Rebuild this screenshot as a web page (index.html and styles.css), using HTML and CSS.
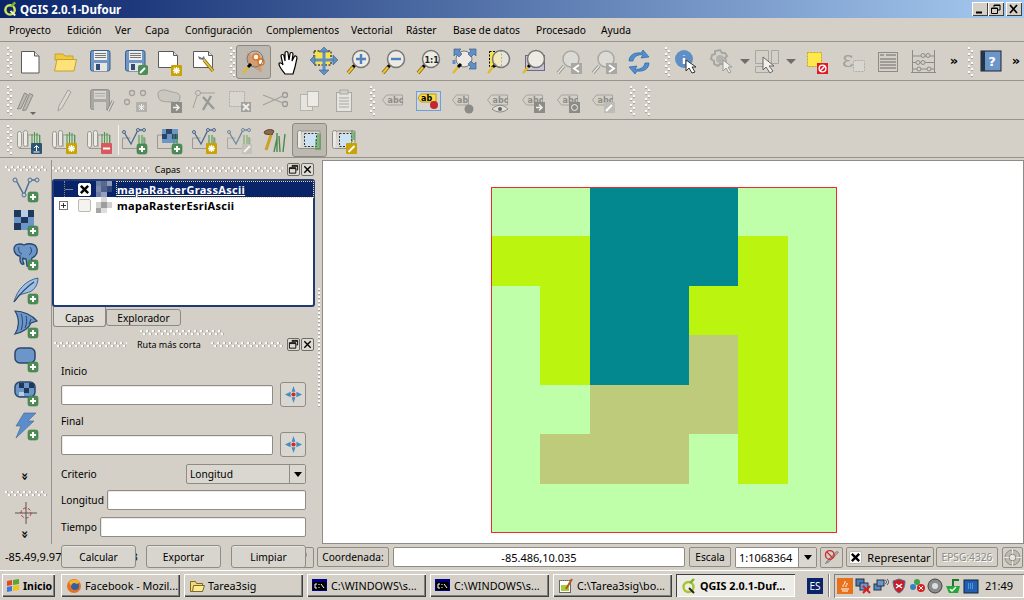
FILE: index.html
```html
<!DOCTYPE html>
<html lang="es">
<head>
<meta charset="utf-8">
<title>QGIS 2.0.1-Dufour</title>
<link rel="stylesheet" href="styles.css">
</head>
<body>
<svg class="defs" aria-hidden="true">
  <defs>
    <symbol id="plus" viewBox="0 0 32 32"><rect x="18" y="20" width="10" height="10" rx="2" fill="#4c8c55" stroke="#3c7a46" stroke-width=".6"/><path d="M23 22v6M20 25h6" stroke="#fff" stroke-width="2"/></symbol>
    <symbol id="star" viewBox="0 0 32 32"><rect x="17" y="19" width="11" height="11" rx="1" fill="#c9a203"/><path d="M22.500 21v7M19 24.500h7M20 22l5 5M25 22l-5 5" stroke="#fff" stroke-width="1.300"/></symbol>
    <symbol id="mag" viewBox="0 0 32 32"><path d="M5 27l6-7" stroke="#7d6a1e" stroke-width="3.600"/><path d="M5 27l6-7" stroke="#eec531" stroke-width="2"/><path d="M10 21l3-3" stroke="#000" stroke-width="3"/><circle cx="18" cy="13" r="8.500" fill="#eceae3" stroke="#777" stroke-width="1.500"/></symbol>
    <symbol id="gmag" viewBox="0 0 32 32"><path d="M5 27l6-7" stroke="#8f8d88" stroke-width="3.400"/><path d="M5 27l6-7" stroke="#e6e4de" stroke-width="1.600"/><circle cx="18" cy="13" r="8" fill="#dcdad4" stroke="#a9a7a1" stroke-width="1.500"/></symbol>
    <symbol id="floppy" viewBox="0 0 32 32"><rect x="6.500" y="4.500" width="19.500" height="20.500" rx="2" fill="#6f96c6" stroke="#3b5f8e"/><rect x="10" y="5" width="13" height="9" fill="#f0efea"/><path d="M11 7.500h11M11 9.500h11M11 11.500h11" stroke="#777"/><rect x="10" y="17" width="13" height="8" fill="#e6e5e0"/><rect x="12" y="18" width="4" height="6" fill="#2f4d75"/></symbol>
    <symbol id="gfloppy" viewBox="0 0 32 32"><rect x="6.500" y="4.500" width="19" height="20" rx="2" fill="#aaa8a2" stroke="#94928c"/><rect x="10" y="6" width="12" height="8" fill="#d6d4ce"/><path d="M11 8.500h10M11 11h10" stroke="#aaa"/><rect x="10" y="17" width="12" height="8" fill="#cfcdc7"/><path d="M24 26l5-10" stroke="#888" stroke-width="3"/><path d="M24 26l5-10" stroke="#ddd" stroke-width="1.200"/></symbol>
    <symbol id="scroll" viewBox="0 0 32 32"><rect x="3.500" y="7.500" width="4" height="16" rx="2" fill="#eceae4" stroke="#9a9892"/><rect x="9.500" y="6.500" width="4" height="16" rx="2" fill="#eceae4" stroke="#9a9892"/><path d="M5 24.500h21V11H14v12" fill="#dad8d1" stroke="#9a9892"/><path d="M18 20V10M20.500 20V8M23 20V9M25.500 20V11" stroke="#4c9a4c" stroke-width="1.100"/></symbol>
    <symbol id="vec" viewBox="0 0 32 32"><path d="M3.500 24.500V14h8M26 14v10.500H3.500" fill="none" stroke="#9a9892"/><path d="M5 8l7 12 7-14 6 0" fill="none" stroke="#46688f" stroke-width="1.300"/><circle cx="5" cy="8" r="1.500" fill="#d4d0c8" stroke="#46688f"/><circle cx="19" cy="6" r="1.500" fill="#d4d0c8" stroke="#46688f"/><circle cx="25" cy="6" r="1.500" fill="#d4d0c8" stroke="#46688f"/><path d="M20 21V11M23 21V11M25 21V13" stroke="#4c9a4c" stroke-width="1.100"/></symbol>
    <symbol id="abc" viewBox="0 0 32 32"><path d="M5.500 15l4-5h16v10h-16z" fill="#d4d0c8" stroke="#a6a49e"/><text x="10.500" y="18" class="svgt" fill="#8e8c87">abc</text></symbol>
    <symbol id="cmd" viewBox="0 0 16 16"><rect x="0" y="1" width="15" height="12" fill="#000080"/><rect x="1" y="4" width="13" height="8" fill="#000"/><path d="M3 6h2M3 10h2M3 6v4M7 6v1M7 9v1M9 6l3 4" stroke="#fff"/></symbol>
    <symbol id="dest" viewBox="0 0 20 20"><path d="M10 1l2 6h-4zM10 19l-2-6h4zM1 10l6-3v6zM19 10l-6 3V7z" fill="#3f8ec4"/><circle cx="10" cy="10" r="2.200" fill="#e02222"/></symbol>
    <symbol id="undock" viewBox="0 0 12 12"><path d="M4.500 3V1.500h6v5H9M1.500 4h7v6h-7zM1.500 5h7M4.500 2.500h6" fill="none" stroke="#000"/></symbol>
    <symbol id="shut" viewBox="0 0 12 12"><path d="M2.500 2.500l7 7M9.500 2.500l-7 7" stroke="#000" stroke-width="1.500"/></symbol>
    <symbol id="cross" viewBox="0 0 12 12"><path d="M2 2l8 8M10 2l-8 8" stroke="#000" stroke-width="2.600"/></symbol>
  </defs>
</svg>

<div class="win">
  <header class="title">
    <svg class="logo" viewBox="0 0 16 16"><circle cx="7.500" cy="9" r="5" fill="none" stroke="#d4e35a" stroke-width="2.600"/><path d="M8 10l5 5" stroke="#f4f6c0" stroke-width="2.200"/><path d="M9 5l4-4" stroke="#7fb02c" stroke-width="2.600"/></svg>
    <span class="title-text">QGIS 2.0.1-Dufour</span>
    <span class="winbtns">
      <span class="wb"><svg viewBox="0 0 16 14"><path d="M4 10.500h6" stroke="#000" stroke-width="2"/></svg></span>
      <span class="wb"><svg viewBox="0 0 16 14"><path d="M6 5V3h6v5h-2M6 3.500h6M3.500 6h6v5.500h-6zM3.500 6.500h6" fill="none" stroke="#000"/></svg></span>
      <span class="wb wb-close"><svg viewBox="0 0 16 14"><path d="M4 3l7 8M11 3l-7 8" stroke="#000" stroke-width="1.700"/></svg></span>
    </span>
  </header>

  <nav class="menu">
    <span>Proyecto</span><span>Edición</span><span>Ver</span><span>Capa</span><span>Configuración</span><span>Complementos</span><span>Vectorial</span><span>Ráster</span><span>Base de datos</span><span>Procesado</span><span>Ayuda</span>
  </nav>

  <div class="tb">
    <span class="hgrip"></span>
    <span class="ic"><svg viewBox="0 0 32 32"><path d="M7.500 5.500h13l4.500 4.500v17H7.500z" fill="#fff" stroke="#5a5a5a"/><path d="M20.500 5.500V10H25" fill="#ddd" stroke="#5a5a5a"/></svg></span>
    <span class="ic"><svg viewBox="0 0 32 32"><path d="M6 12V8h8l2 2h8v4H6z" fill="#f0ca3e" stroke="#c4a22b"/><path d="M5.500 25 8 13.500h19.500L25 25z" fill="#fde27a" stroke="#c4a22b"/></svg></span>
    <span class="ic"><svg viewBox="0 0 32 32"><use href="#floppy"/></svg></span>
    <span class="ic"><svg viewBox="0 0 32 32"><use href="#floppy"/><rect x="19" y="19" width="10" height="10" rx="2" fill="#4c8c55"/><path d="M21 27l5-5" stroke="#fff" stroke-width="2"/></svg></span>
    <span class="ic"><svg viewBox="0 0 32 32"><path d="M4.500 5.500h15l4 4v12h-19z" fill="#fff" stroke="#5a5a5a"/><path d="M19.500 5.500v4h4" fill="#ddd" stroke="#5a5a5a"/><use href="#star"/></svg></span>
    <span class="ic"><svg viewBox="0 0 32 32"><path d="M4.500 5.500h15l4 4v12h-19z" fill="#fff" stroke="#5a5a5a"/><path d="M19.500 5.500v4h4" fill="#ddd" stroke="#5a5a5a"/><path d="M9 10l1 3 4 1 2-1-1-3-2 2-2-1z" fill="#777"/><path d="M15 14l9 11" stroke="#7d6a1e" stroke-width="3.400"/><path d="M15 14l9 11" stroke="#eec531" stroke-width="1.800"/></svg></span>
    <span class="hgrip hgrip-m"></span>
    <span class="ic ic-on"><svg viewBox="0 0 32 32"><path d="M9 6l8 6 8-1-2 8 1 8-9-6-6-4z" fill="#d9925e" opacity=".7"/><circle cx="18" cy="11" r="3" fill="#fff" stroke="#e2731c" stroke-width="1.500"/><circle cx="23" cy="16" r="3" fill="#fff" stroke="#e2731c" stroke-width="1.500"/><circle cx="17" cy="13" r="8" fill="none" stroke="#777"/><path d="M5 27l6-7" stroke="#e0b92c" stroke-width="2.400"/><path d="M10 21l3-3" stroke="#000" stroke-width="3"/></svg></span>
    <span class="ic"><svg viewBox="0 0 32 32"><path d="M12 28c-2-3-6-7-6-10 0-2 3-1 4 1l-2-9c0-2 3-2 3 0l1 5V7c0-2 3-2 3 0l1 7 1-6c0-2 3-2 3 0l-1 7 2-4c1-2 3-1 3 1l-2 9-2 7z" fill="#fff" stroke="#000" stroke-width="1.200"/></svg></span>
    <span class="ic"><svg viewBox="0 0 32 32"><rect x="6" y="5" width="17" height="14" fill="#f7e24b" stroke="#000" stroke-dasharray="2 1.500"/><path d="M16 14V4M16 14v11M16 14H4M16 14h12" stroke="#5f8fc4" stroke-width="3"/><path d="M16 1l5 5H11zM16 29l-5-5h10zM2 14l5-5v10zM30 14l-5 5V9z" fill="#5f8fc4" stroke="#3d6189" stroke-width=".6"/></svg></span>
    <span class="ic"><svg viewBox="0 0 32 32"><use href="#mag"/><path d="M18 8v10M13 13h10" stroke="#4f81bd" stroke-width="2.400"/></svg></span>
    <span class="ic"><svg viewBox="0 0 32 32"><use href="#mag"/><path d="M13 13h10" stroke="#4f81bd" stroke-width="2.400"/></svg></span>
    <span class="ic"><svg viewBox="0 0 32 32"><use href="#mag"/><text x="11.500" y="16.500" class="svgt svgt-d">1:1</text></svg></span>
    <span class="ic"><svg viewBox="0 0 32 32"><circle cx="16" cy="13" r="8" fill="#eceae3" stroke="#777"/><path d="M6 3h7l-2 2 3 3-3 3-3-3-2 2zM28 3h-7l2 2-3 3 3 3 3-3 2 2zM28 23h-7l2-2-3-3 3-3 3 3 2-2z" fill="#5f8fc4" stroke="#3d6189" stroke-width=".7"/><path d="M6 14v4" stroke="#5f8fc4" stroke-width="3"/><path d="M5 27l6-7" stroke="#e0b92c" stroke-width="2.400"/><path d="M10 21l3-3" stroke="#000" stroke-width="3"/></svg></span>
    <span class="ic"><svg viewBox="0 0 32 32"><rect x="6.500" y="5.500" width="12" height="15" fill="#f7e24b" stroke="#000" stroke-dasharray="2 1.500"/><path d="M5 27l6-7" stroke="#e0b92c" stroke-width="2.400"/><path d="M10 21l3-3" stroke="#000" stroke-width="3"/><circle cx="18" cy="13" r="8.500" fill="#eceae3" fill-opacity=".75" stroke="#777" stroke-width="1.500"/></svg></span>
    <span class="ic"><svg viewBox="0 0 32 32"><rect x="7.500" y="9.500" width="19" height="15" fill="#c7c3d2" stroke="#6d6780"/><path d="M5 27l6-7" stroke="#e0b92c" stroke-width="2.400"/><path d="M10 21l3-3" stroke="#000" stroke-width="3"/><circle cx="18" cy="13" r="8.500" fill="#eceae3" stroke="#777" stroke-width="1.500"/></svg></span>
    <span class="ic"><svg viewBox="0 0 32 32"><use href="#gmag"/><rect x="18" y="17" width="11" height="11" fill="#a9a7a1"/><path d="M26 19l-5 3.500 5 3.500" fill="none" stroke="#fff" stroke-width="1.800"/></svg></span>
    <span class="ic"><svg viewBox="0 0 32 32"><use href="#gmag"/><rect x="18" y="17" width="11" height="11" fill="#a9a7a1"/><path d="M21 19l5 3.500-5 3.500" fill="none" stroke="#fff" stroke-width="1.800"/></svg></span>
    <span class="ic"><svg viewBox="0 0 32 32"><path d="M6 15c0-6 6-9 12-8l2-3 6 7-8 1 2-3c-4-1-9 1-10 6z" fill="#4f8fd0" stroke="#2c64a0" stroke-width=".7"/><path d="M26 17c0 6-6 9-12 8l-2 3-6-7 8-1-2 3c4 1 9-1 10-6z" fill="#4f8fd0" stroke="#2c64a0" stroke-width=".7"/></svg></span>
    <span class="hgrip hgrip-e"></span>
    <span class="ic"><svg viewBox="0 0 32 32"><circle cx="12" cy="13" r="9" fill="#5f8fc4"/><path d="M12 9v.5M12 12v6" stroke="#fff" stroke-width="2.400"/><path d="M14 14v11l3-3 3 5 3-1-3-5h4z" fill="#fff" stroke="#333"/></svg></span>
    <span class="ic ic-33"><svg viewBox="0 0 32 32"><path d="M14 4l2 3h3l2 3-2 2 1 3-3 3h-3l-2 2-4-2v-3l-3-2 1-4 3-1V5z" fill="#d4d0c8" stroke="#a8a6a0" stroke-width="2"/><circle cx="14" cy="13" r="4" fill="#b4b2ac"/><path d="M17 14v11l3-3 3 5 2-1-3-5h4z" fill="#f0efea" stroke="#999"/></svg></span>
    <span class="drop"></span>
    <span class="ic ic-32"><svg viewBox="0 0 32 32"><path d="M3.500 4.500h13v13h-13zM19.500 4.500h7v13h-7zM3.500 20.500h13v6h-13z" fill="#d4d0c8" stroke="#a8a6a0"/><path d="M11 11v13l3-3 4 6 3-2-4-5h5z" fill="#f0efea" stroke="#666"/></svg></span>
    <span class="drop"></span>
    <span class="ic ic-37"><svg viewBox="0 0 32 32"><rect x="6.500" y="6.500" width="14" height="14" fill="#fde84d" stroke="#c7a51f" stroke-dasharray="2 1"/><rect x="16" y="17" width="11" height="11" fill="#dd1a25"/><circle cx="21.500" cy="22.500" r="3.400" fill="none" stroke="#fff" stroke-width="1.400"/><path d="M19 25l5-5" stroke="#fff" stroke-width="1.400"/></svg></span>
    <span class="ic"><svg viewBox="0 0 32 32"><text x="5" y="21" class="svgt-e">ε</text><rect x="16.500" y="14.500" width="11" height="11" rx="1" fill="#d8d6cf" stroke="#aeaca6" stroke-dasharray="2 1"/></svg></span>
    <span class="ic"><svg viewBox="0 0 32 32"><rect x="6.500" y="6.500" width="19" height="19" fill="#d4d0c8" stroke="#8d8b86"/><path d="M8 9h4M14 9h10M8 13h16M8 16h16M8 19h16M8 22h16" stroke="#8d8b86" stroke-width="1.300"/></svg></span>
    <span class="ic"><svg viewBox="0 0 32 32"><path d="M5.500 4v22M27.500 4v22M4 26.500h25M6 10h21M6 16.500h21M6 23h21" stroke="#8d8b86" fill="none"/><circle cx="16" cy="9.500" r="2" fill="#d4d0c8" stroke="#8d8b86"/><circle cx="21" cy="9.500" r="2" fill="#d4d0c8" stroke="#8d8b86"/><circle cx="11" cy="16.500" r="2" fill="#d4d0c8" stroke="#8d8b86"/><circle cx="16" cy="16.500" r="2" fill="#d4d0c8" stroke="#8d8b86"/><circle cx="12" cy="23" r="2" fill="#d4d0c8" stroke="#8d8b86"/><circle cx="22" cy="23" r="2" fill="#d4d0c8" stroke="#8d8b86"/></svg></span>
    <span class="more">»</span>
    <span class="hgrip"></span>
    <span class="ic ic-36"><svg viewBox="0 0 32 32"><rect x="6" y="5" width="20" height="20" fill="#6c96c8" stroke="#223"/><rect x="6" y="5" width="4" height="20" fill="#23354a"/><text x="17" y="20" class="svgt-q">?</text></svg></span>
    <span class="more more-e">»</span>
  </div>

  <div class="tb tb-2">
    <span class="hgrip"></span>
    <span class="ic"><svg viewBox="0 0 32 32"><g fill="#bab8b2" stroke="#8d8b86"><path d="M3.500 24l7-16 3 1.500-6.500 14z"/><path d="M8.500 25.500l7-17 3.500 1.500-7 15z"/></g><path d="M16 27h6l-3 3z" fill="#666"/></svg></span>
    <span class="ic"><svg viewBox="0 0 32 32"><path d="M9 26l1-5L19 5l3 2-9 16z" fill="#dad8d1" stroke="#a3a19b"/></svg></span>
    <span class="ic"><svg viewBox="0 0 32 32"><use href="#gfloppy"/></svg></span>
    <span class="ic"><svg viewBox="0 0 32 32"><circle cx="13" cy="8" r="2.500" fill="none" stroke="#a3a19b" stroke-width="1.300"/><circle cx="24" cy="8" r="2.500" fill="none" stroke="#a3a19b" stroke-width="1.300"/><circle cx="8" cy="17" r="2.500" fill="none" stroke="#a3a19b" stroke-width="1.300"/><rect x="17" y="17" width="11" height="10" fill="#b3b1ab"/><path d="M22.500 19v6M19.500 22h6M20 20l5 5M25 20l-5 5" stroke="#eee"/></svg></span>
    <span class="ic"><svg viewBox="0 0 32 32"><path d="M4 9c0-4 6-5 11-3s11 1 11 6-3 6-8 5-14 2-14-8z" fill="#c9c7c0" stroke="#a3a19b"/><rect x="17" y="17" width="11" height="11" fill="#8d8b86"/><path d="M19 22.500h5M22 19.500l3 3-3 3" fill="none" stroke="#eee" stroke-width="1.500"/></svg></span>
    <span class="ic"><svg viewBox="0 0 32 32"><circle cx="9" cy="8" r="2.500" fill="none" stroke="#a3a19b"/><path d="M8 11L4 23M11 8h15" stroke="#a3a19b"/><path d="M14 12l11 12M22 11l-8 14" stroke="#999" stroke-width="2.400"/></svg></span>
    <span class="ic"><svg viewBox="0 0 32 32"><rect x="5.500" y="6.500" width="15" height="15" fill="#d8d6cf" stroke="#aeaca6" stroke-dasharray="2 1"/><rect x="17" y="17" width="10" height="10" fill="#a3a19b"/><path d="M19 19l6 6M25 19l-6 6" stroke="#eee" stroke-width="2"/></svg></span>
    <span class="ic"><svg viewBox="0 0 32 32"><circle cx="26" cy="10" r="2.500" fill="none" stroke="#999" stroke-width="1.300"/><circle cx="26" cy="19" r="2.500" fill="none" stroke="#999" stroke-width="1.300"/><path d="M4 10l20 8M4 20l20-9" stroke="#a3a19b" stroke-width="1.300"/></svg></span>
    <span class="ic"><svg viewBox="0 0 32 32"><rect x="6.500" y="9.500" width="12" height="16" fill="#e6e4de" stroke="#b5b3ad"/><rect x="13.500" y="6.500" width="11" height="15" fill="#eceae4" stroke="#b5b3ad"/></svg></span>
    <span class="ic"><svg viewBox="0 0 32 32"><rect x="7.500" y="7.500" width="15" height="19" fill="#e6e4de" stroke="#a9a7a1"/><path d="M10 13h10M10 16h10M10 19h10M10 22h10" stroke="#a9a7a1"/><rect x="11" y="5" width="8" height="4" fill="#d4d0c8" stroke="#a9a7a1"/></svg></span>
    <span class="hgrip hgrip-l"></span>
    <span class="ic"><svg viewBox="0 0 32 32"><use href="#abc"/></svg></span>
    <span class="ic"><svg viewBox="0 0 32 32"><rect x="4.500" y="6.500" width="24" height="19" fill="#d8d5ce" stroke="#6aa0e0"/><path d="M6 13l3-4h15v8H9z" fill="#f8dd4b" stroke="#b8991a"/><text x="9" y="16" class="svgt">ab</text><circle cx="22" cy="20" r="4" fill="#c1272d"/></svg></span>
    <span class="ic"><svg viewBox="0 0 32 32"><path d="M5.500 15l4-5h12v10h-12z" fill="#d4d0c8" stroke="#a6a49e"/><text x="10" y="18" class="svgt" fill="#8e8c87">ab</text><circle cx="22" cy="24" r="4.500" fill="#8d8b86"/></svg></span>
    <span class="ic"><svg viewBox="0 0 32 32"><use href="#abc"/><path d="M10 24c5-5 11-5 16 0-5 4-11 4-16 0z" fill="#e0ded8" stroke="#8d8b86"/><circle cx="18" cy="24" r="2" fill="#666"/></svg></span>
    <span class="ic"><svg viewBox="0 0 32 32"><use href="#abc"/><rect x="17" y="17" width="11" height="11" fill="#8d8b86"/><path d="M19 22.500h5M22 19.500l3 3-3 3" fill="none" stroke="#eee" stroke-width="1.500"/></svg></span>
    <span class="ic"><svg viewBox="0 0 32 32"><use href="#abc"/><rect x="17" y="17" width="11" height="11" fill="#8d8b86"/><circle cx="22.500" cy="22.500" r="3" fill="none" stroke="#eee"/></svg></span>
    <span class="ic"><svg viewBox="0 0 32 32"><use href="#abc"/><rect x="17" y="17" width="11" height="11" fill="#bebcb6"/><path d="M19 26l6-6" stroke="#fff" stroke-width="2"/></svg></span>
    <span class="hgrip hgrip-a"></span>
    <span class="hgrip hgrip-a"></span>
  </div>

  <div class="tb tb-3">
    <span class="hgrip"></span>
    <span class="ic"><svg viewBox="0 0 32 32"><use href="#scroll"/><rect x="17" y="19" width="11" height="11" rx="1" fill="#2f5574"/><path d="M22.500 27v-5M20 24l2.500-2.500L25 24M19.500 28h6" fill="none" stroke="#fff"/></svg></span>
    <span class="ic"><svg viewBox="0 0 32 32"><use href="#scroll"/><use href="#star"/></svg></span>
    <span class="ic"><svg viewBox="0 0 32 32"><use href="#scroll"/><rect x="17" y="19" width="11" height="11" rx="1" fill="#d8595f"/><path d="M19 24.500h7" stroke="#fff" stroke-width="2"/></svg></span>
    <span class="vsep"></span>
    <span class="ic"><svg viewBox="0 0 32 32"><use href="#vec"/><use href="#plus"/></svg></span>
    <span class="ic"><svg viewBox="0 0 32 32"><path d="M3.500 24.500V11h12M26 24.500H3.500" fill="none" stroke="#9a9892"/><rect x="8" y="5" width="16" height="14" fill="#6c96c8"/><rect x="12" y="5" width="6" height="5" fill="#2b4566"/><rect x="8" y="10" width="5" height="5" fill="#2b4566"/><rect x="18" y="10" width="6" height="5" fill="#2b4566"/><path d="M20 22V10M23 22V10" stroke="#4c9a4c"/><use href="#plus"/></svg></span>
    <span class="ic"><svg viewBox="0 0 32 32"><use href="#vec"/><use href="#star"/></svg></span>
    <span class="ic ic-off"><svg viewBox="0 0 32 32"><use href="#vec"/><rect x="18" y="20" width="10" height="10" fill="#bebcb6"/><path d="M20 28l6-6" stroke="#fff" stroke-width="2"/></svg></span>
    <span class="ic"><svg viewBox="0 0 32 32"><path d="M5 8c3-3 8-3 10-1l-2 4-7-1z" fill="#8a6a4e" stroke="#5c4430"/><path d="M12 11L7 26" stroke="#c9a227" stroke-width="3"/><path d="M18 28V9M21 28l-1-16M24 28l2-18M15 28l3-14" stroke="#4c8a4c" stroke-width="1.400"/></svg></span>
    <span class="ic ic-on"><svg viewBox="0 0 32 32"><rect x="3.500" y="6.500" width="4.500" height="18" rx="2" fill="#eceae4" stroke="#8d8b86"/><path d="M6 24.500h20V7H8" fill="#dad8d1" stroke="#918f89"/><rect x="10.500" y="9.500" width="12" height="13" fill="#cde3f5" stroke="#333" stroke-dasharray="2 1.500"/><path d="M24 26V9M26 26V10M22 26V15" stroke="#4c9a4c" stroke-width="1.200"/></svg></span>
    <span class="ic"><svg viewBox="0 0 32 32"><rect x="3.500" y="6.500" width="4.500" height="18" rx="2" fill="#eceae4" stroke="#8d8b86"/><path d="M6 24.500h20V7H8" fill="#dad8d1" stroke="#918f89"/><rect x="10.500" y="9.500" width="12" height="13" fill="#cde3f5" stroke="#333" stroke-dasharray="2 1.500"/><path d="M23 18V6M25 16V8" stroke="#4c9a4c" stroke-width="1.200"/><rect x="17" y="19" width="11" height="11" rx="1" fill="#c9a203"/><path d="M19.500 28l6-6" stroke="#fff" stroke-width="2"/></svg></span>
  </div>

  <main class="main">
    <aside class="rail">
      <span class="vgrip"></span>
      <span class="rl"><svg viewBox="0 0 32 32"><path d="M6 8l8 15 6-15 7 0" fill="none" stroke="#4c6f99" stroke-width="1.500"/><circle cx="5" cy="8" r="2" fill="#d4d0c8" stroke="#4c6f99"/><circle cx="14" cy="23" r="2" fill="#d4d0c8" stroke="#4c6f99"/><circle cx="20" cy="8" r="2" fill="#d4d0c8" stroke="#4c6f99"/><circle cx="27" cy="8" r="2" fill="#d4d0c8" stroke="#4c6f99"/><use href="#plus"/></svg></span>
      <span class="rl"><svg viewBox="0 0 32 32"><rect x="4" y="4" width="20" height="20" fill="#6c96c8"/><rect x="4" y="4" width="7" height="7" fill="#20395a"/><rect x="18" y="4" width="6" height="7" fill="#20395a"/><rect x="11" y="11" width="7" height="6" fill="#20395a"/><rect x="4" y="17" width="7" height="7" fill="#20395a"/><rect x="11" y="4" width="7" height="7" fill="#b7cde6"/><use href="#plus"/></svg></span>
      <span class="rl"><svg viewBox="0 0 32 32"><path d="M4 9c0-5 6-6 10-4 4-2 12-2 13 4 1 5-3 8-5 9-1 3-1 6-2 8h-3l-1-7c-1 0-2 0-3-1-1 2 0 4 1 6-2 1-4-1-4-4v-4c-3 0-6-3-6-7z" fill="#6c96c8" stroke="#27466d" stroke-width="1.300"/><path d="M9 7c-1 3 0 6 3 7M20 7c2 2 2 6-1 8" fill="none" stroke="#27466d"/><use href="#plus"/></svg></span>
      <span class="rl"><svg viewBox="0 0 32 32"><path d="M4 28C7 16 16 6 28 4c0 8-5 14-12 15l-7 2z" fill="#9dbfe3" stroke="#3f6590"/><path d="M4 28C10 20 15 14 24 8" fill="none" stroke="#27466d" stroke-width="1.200"/><use href="#plus"/></svg></span>
      <span class="rl"><svg viewBox="0 0 32 32"><path d="M5 3c8 0 17 4 22 10l-6 2c-2 5-8 9-16 11 4-6 5-15 0-23z" fill="#6c96c8" stroke="#27466d" stroke-width="1.200"/><path d="M11 6c2 4 2 11 0 16M16 8c1 3 1 8-1 12M21 11l-2 5" fill="none" stroke="#27466d"/><use href="#plus"/></svg></span>
      <span class="rl"><svg viewBox="0 0 32 32"><rect x="5" y="6" width="20" height="15" rx="5" fill="#6c96c8" stroke="#27466d" stroke-width="1.500"/><use href="#plus"/></svg></span>
      <span class="rl"><svg viewBox="0 0 32 32"><rect x="5" y="6" width="20" height="15" rx="5" fill="#6c96c8" stroke="#27466d" stroke-width="1.500"/><rect x="9" y="7" width="5" height="5" fill="#20395a"/><rect x="19" y="7" width="5" height="5" fill="#20395a"/><rect x="14" y="12" width="5" height="5" fill="#20395a"/><rect x="9" y="16" width="5" height="4" fill="#b7cde6"/><use href="#plus"/></svg></span>
      <span class="rl"><svg viewBox="0 0 32 32"><path d="M14 3h12L18 11h6L6 28l5-12H6z" fill="#5b8ccb" stroke="#3f6590" stroke-width=".6"/><use href="#plus"/></svg></span>
      <span class="chev chev-1">»</span>
      <span class="vgrip vgrip-2"></span>
      <span class="rl"><svg viewBox="0 0 32 32"><path d="M16 5v22M5 16h22" stroke="#555"/><circle cx="16" cy="16" r="5" fill="none" stroke="#b43131" stroke-dasharray="3 2"/></svg></span>
      <span class="chev chev-2">»</span>
    </aside>

    <section class="dock">
      <div class="dtitle">
        <span class="dots"></span><span class="dname">Capas</span><span class="dots"></span>
        <span class="dbtn"><svg viewBox="0 0 12 12"><use href="#undock"/></svg></span>
        <span class="dbtn"><svg viewBox="0 0 12 12"><use href="#shut"/></svg></span>
      </div>
      <div class="tree">
        <div class="node node-sel">
          <span class="twig"></span>
          <span class="chk chk-on"><svg viewBox="0 0 12 12"><use href="#cross"/></svg></span>
          <span class="thumb"><i class="t1"></i><i class="t2"></i><i class="t3"></i><i class="t4"></i><i class="t5"></i><i class="t6"></i><i class="t7"></i><i class="t8"></i><i class="t9"></i></span>
          <span class="nname nname-sel">mapaRasterGrassAscii</span>
        </div>
        <div class="node">
          <span class="expand"></span>
          <span class="chk"></span>
          <span class="thumb thumb-g"><i class="t1"></i><i class="t2"></i><i class="t3"></i><i class="t4"></i><i class="t5"></i><i class="t6"></i><i class="t7"></i><i class="t8"></i><i class="t9"></i></span>
          <span class="nname">mapaRasterEsriAscii</span>
        </div>
      </div>
      <div class="tabs"><span class="tab tab-on">Capas</span><span class="tab">Explorador</span></div>
      <div class="hdots"></div>
      <div class="dtitle dtitle-2">
        <span class="dots dots-s"></span><span class="dname">Ruta más corta</span><span class="dots"></span>
        <span class="dbtn"><svg viewBox="0 0 12 12"><use href="#undock"/></svg></span>
        <span class="dbtn"><svg viewBox="0 0 12 12"><use href="#shut"/></svg></span>
      </div>
      <form class="form">
        <label class="lab">Inicio</label>
        <div class="row"><input class="fld" type="text"><span class="pick"><svg viewBox="0 0 20 20"><use href="#dest"/></svg></span></div>
        <label class="lab lab-2">Final</label>
        <div class="row"><input class="fld" type="text"><span class="pick"><svg viewBox="0 0 20 20"><use href="#dest"/></svg></span></div>
        <div class="line line-c"><span>Criterio</span><span class="combo"><span class="combo-v">Longitud</span><span class="combo-a"></span></span></div>
        <div class="line line-l"><span class="ll">Longitud</span><input class="fld" type="text"></div>
        <div class="line"><span class="ll ll-t">Tiempo</span><input class="fld" type="text"></div>
        <div class="acts"><span class="btn">Calcular</span><span class="btn">Exportar</span><span class="btn">Limpiar</span></div>
      </form>
    </section>

    <div class="split"><span class="split-dots"></span></div>

    <section class="canvas">
      <div class="map">
        <i class="l"></i><i class="l"></i><i class="t"></i><i class="t"></i><i class="t"></i><i class="l"></i><i class="l"></i>
        <i class="y"></i><i class="y"></i><i class="t"></i><i class="t"></i><i class="t"></i><i class="y"></i><i class="l"></i>
        <i class="l"></i><i class="y"></i><i class="t"></i><i class="t"></i><i class="y"></i><i class="y"></i><i class="l"></i>
        <i class="l"></i><i class="y"></i><i class="t"></i><i class="t"></i><i class="k"></i><i class="y"></i><i class="l"></i>
        <i class="l"></i><i class="l"></i><i class="k"></i><i class="k"></i><i class="k"></i><i class="y"></i><i class="l"></i>
        <i class="l"></i><i class="k"></i><i class="k"></i><i class="k"></i><i class="l"></i><i class="y"></i><i class="l"></i>
        <i class="l"></i><i class="l"></i><i class="l"></i><i class="l"></i><i class="l"></i><i class="l"></i><i class="l"></i>
      </div>
    </section>
  </main>

  <footer class="status">
    <span class="extent">-85.49,9.97 : -85.08,10.23</span>
    <span class="sbtn sbtn-r"><svg viewBox="0 0 22 22"><circle cx="11" cy="8" r="4" fill="none" stroke="#666" stroke-width="1.500"/><path d="M12 12c3 3 1 7-2 8" fill="none" stroke="#333" stroke-width="1.600"/></svg></span>
    <span class="sbox sbox-c">Coordenada:</span>
    <span class="sval">-85.486,10.035</span>
    <span class="sbox sbox-e">Escala</span>
    <span class="scombo"><span class="scombo-v">1:1068364</span><span class="combo-a combo-a2"></span></span>
    <span class="sbtn sbtn-n"><svg viewBox="0 0 22 22"><path d="M4 18l4-2L19 5l-2-1L6 15z" fill="#b5b3ad" stroke="#77756f"/><circle cx="9" cy="8" r="5" fill="none" stroke="#cc3030" stroke-width="1.600"/><path d="M5.500 4.500l7 7" stroke="#cc3030" stroke-width="1.600"/></svg></span>
    <span class="sbox sbox-r"><span class="chk chk-on chk-s"><svg viewBox="0 0 12 12"><use href="#cross"/></svg></span>Representar</span>
    <span class="sbox sbox-p">EPSG:4326</span>
    <span class="sbtn sbtn-g"><svg viewBox="0 0 20 20"><circle cx="10" cy="10" r="8" fill="#bdbab2" stroke="#8a8780"/><circle cx="10" cy="10" r="3.500" fill="#e6e4de" stroke="#8a8780"/><path d="M10 1v5M10 14v5M1 10h5M14 10h5" stroke="#eee"/></svg></span>
  </footer>

  <div class="taskbar">
    <span class="start"><svg viewBox="0 0 16 16"><path d="M2 3l5-1v5l-5 1z" fill="#e34a1f"/><path d="M8 2l6-1v5l-6 1z" fill="#5ba532"/><path d="M2 9l5-1v5l-5 1z" fill="#3d78d8"/><path d="M8 8l6-1v5l-6 1z" fill="#f2c419"/></svg>Inicio</span>
    <span class="task"><svg viewBox="0 0 16 16"><circle cx="8" cy="8" r="7" fill="#e8701f"/><circle cx="9" cy="8" r="4" fill="#2f5fa6"/><path d="M3 4c3-3 8-3 11 0l-3 2C8 4 6 5 5 8z" fill="#f7b32b"/></svg>Facebook - Mozil...</span>
    <span class="task"><svg viewBox="0 0 16 16"><path d="M1.500 13.500V3.500h5l1 2h6v8z" fill="#f5d878" stroke="#7d6a1e"/><path d="M3.500 13.500l1-6h11l-2 6z" fill="#fce99a" stroke="#7d6a1e"/></svg>Tarea3sig</span>
    <span class="task"><svg viewBox="0 0 16 16"><use href="#cmd"/></svg>C:\WINDOWS\s...</span>
    <span class="task"><svg viewBox="0 0 16 16"><use href="#cmd"/></svg>C:\WINDOWS\s...</span>
    <span class="task"><svg viewBox="0 0 16 16"><rect x="1.500" y="2.500" width="11" height="12" fill="#fff" stroke="#666"/><rect x="3" y="7" width="8" height="6" fill="#a6cc3e"/><path d="M2 2.500h10" stroke="#888" stroke-dasharray="1 1"/><path d="M8 11l6-10" stroke="#b8561c" stroke-width="2"/></svg>C:\Tarea3sig\bo...</span>
    <span class="task task-on"><svg viewBox="0 0 16 16"><circle cx="7.500" cy="9" r="5" fill="none" stroke="#a7c52e" stroke-width="2.400"/><path d="M8 10l5 5" stroke="#222" stroke-width="2"/><path d="M9 5l4-4" stroke="#7fb02c" stroke-width="2.400"/></svg>QGIS 2.0.1-Duf...</span>
    <span class="lang">ES</span>
    <span class="tbsep"></span>
    <span class="tray">
      <svg viewBox="0 0 16 16"><rect width="16" height="16" fill="#e8711a"/><path d="M4 11h8M5 13h6M6 9c-1-2 3-3 2-6M9 9c-1-2 2-2 1-4" stroke="#fff" fill="none"/></svg>
      <svg viewBox="0 0 16 16"><rect x="1" y="1" width="8" height="7" fill="#4f7ab5" stroke="#234"/><rect x="5" y="5" width="8" height="7" fill="#6d96cc" stroke="#234"/><path d="M8 8l7 7M15 8l-7 7" stroke="#d81e1e" stroke-width="2"/></svg>
      <svg viewBox="0 0 16 16"><rect x="1" y="6" width="7" height="6" fill="#5e87c0" stroke="#234"/><rect x="4" y="2" width="7" height="6" fill="#6d96cc" stroke="#234"/><path d="M12 2c2 1 2 3 0 4M14 1c2 2 2 4 0 6" fill="none" stroke="#446"/></svg>
      <svg viewBox="0 0 16 16"><path d="M8 1l6 2c0 6-2 10-6 12C4 13 2 9 2 3z" fill="#c41e2b" stroke="#5d6f8a"/><path d="M5 6l6 4M11 6l-6 4" stroke="#fff" stroke-width="1.500"/></svg>
      <svg viewBox="0 0 16 16"><circle cx="8" cy="4" r="3" fill="#3aa44a"/><circle cx="4" cy="9" r="3" fill="#3a7fc4"/><circle cx="12" cy="10" r="4" fill="#d81e1e"/><path d="M10 8l4 4M14 8l-4 4" stroke="#fff"/></svg>
      <svg viewBox="0 0 16 16"><circle cx="8" cy="8" r="7" fill="#8c8c8c" stroke="#444"/><circle cx="8" cy="8" r="3" fill="#ddd"/></svg>
      <svg viewBox="0 0 16 16"><path d="M1 8l3 7h9l2-7z" fill="#22a836"/><path d="M5 11l2 2 4-4" fill="none" stroke="#fff" stroke-width="1.500"/><path d="M8 8V2h6" fill="none" stroke="#1a7a28" stroke-width="2"/></svg>
      <svg viewBox="0 0 16 16"><rect x="1" y="2" width="14" height="13" fill="#1f5fb4" stroke="#123"/><path d="M5 6h6M5 8h6M5 10h6" stroke="#9cc4ee" stroke-dasharray="1 1"/></svg>
      <span class="clock">21:49</span>
    </span>
  </div>
</div>
</body>
</html>
```

FILE: styles.css
```css
* { box-sizing: border-box; }
html, body { margin: 0; padding: 0; }
body { width: 1024px; height: 600px; overflow: hidden; background: #d4d0c8; font: 10.200px "Noto Sans", "DejaVu Sans", sans-serif; color: #000; }
.defs { width: 0; height: 0; display: block; }
svg { display: block; }
.svgt { font: bold 8px "DejaVu Sans", sans-serif; }
.svgt-d { font: bold 8px "DejaVu Sans", sans-serif; fill: #222; }
.svgt-e { font: 22px "DejaVu Serif", serif; fill: #a3a19b; }
.svgt-q { font: bold 13px "DejaVu Sans", sans-serif; fill: #fff; text-anchor: middle; }

.win { width: 1024px; height: 600px; display: flex; flex-direction: column; }

.title { height: 18px; display: flex; align-items: center; background: linear-gradient(90deg, #0a246a, #a6caf0); color: #fff; font-weight: 700; padding-left: 3px; flex: none; }
.logo { width: 15px; height: 16px; margin-right: 2px; }
.title-text { font-size: 11.500px; }
.winbtns { margin-left: auto; display: flex; padding-right: 2px; }
.wb { width: 16px; height: 14px; background: #d4d0c8; box-shadow: inset 1px 1px #fff, inset -1px -1px #404040; }
.wb-close { margin-left: 2px; }

.menu { height: 23px; display: grid; grid-template-columns: 43px 33px 15px 25px 66px 70px 40px 32px 68px 50px 30px; column-gap: 15px; align-items: center; padding-left: 9px; flex: none; white-space: nowrap; }

.tb { height: 39px; display: flex; align-items: center; flex: none; border-top: 1px solid #96938c; border-bottom: 1px solid #d4d0c8; padding: 2px 0 0 7px; }
.tb-3 { border-bottom: 1px solid #96938c; }

.hgrip { width: 5px; height: 30px; flex: none; background-image: linear-gradient(#fafaf8 2px, #a9a69f 2px 3px, transparent 3px), linear-gradient(#fafaf8 2px, #a9a69f 2px 3px, transparent 3px); background-size: 2px 6px, 2px 6px; background-position: 0 0, 3px 3px; background-repeat: repeat-y; }
.hgrip-m { margin: 0 1px 0 8px; }
.hgrip-e { margin-left: 9px; }
.hgrip-l { margin-left: 8px; }
.hgrip-a { margin-left: 10px; }

.ic { width: 35px; height: 34px; flex: none; display: flex; align-items: center; justify-content: center; }
.ic svg { width: 32px; height: 32px; }
.ic-33 { width: 33px; }
.ic-32 { width: 32px; }
.ic-37 { width: 37px; }
.ic-36 { width: 36px; }
.ic-on { background: #bdb9b1; border: 1px solid #8d8a83; border-radius: 3px; }
.ic-off { opacity: .7; }
.drop { width: 14px; height: 5px; flex: none; clip-path: polygon(2px 0, 12px 0, 7px 5px); background: #6f6d68; }
.more { font: bold 13px "DejaVu Sans", sans-serif; width: 28px; text-align: center; flex: none; padding-bottom: 3px; }
.more-e { width: 14px; }
.vsep { width: 1px; height: 30px; background: #f4f3ef; flex: none; margin: 0 -2px 0 1px; }

.main { height: 384px; margin-top: 2px; display: flex; flex: none; }

.rail { width: 52px; flex: none; border-right: 1px solid #96938c; display: flex; flex-direction: column; align-items: center; }
.vgrip { width: 42px; height: 5px; flex: none; margin-top: 6px; background-image: linear-gradient(90deg, #fafaf8 2px, #a9a69f 2px 3px, transparent 3px), linear-gradient(90deg, #fafaf8 2px, #a9a69f 2px 3px, transparent 3px); background-size: 6px 2px, 6px 2px; background-position: 0 0, 3px 3px; background-repeat: repeat-x; }
.vgrip-2 { margin-top: 7px; }
.rl { width: 32px; height: 34px; flex: none; display: flex; align-items: center; justify-content: center; }
.rl svg { width: 32px; height: 32px; }
.chev { font: bold 13px "DejaVu Sans", sans-serif; transform: rotate(90deg); height: 15px; line-height: 15px; flex: none; }
.chev-1 { margin-top: 26px; }
.chev-2 { margin-top: -3px; }

.dock { width: 264px; flex: none; display: flex; flex-direction: column; }
.dtitle { height: 19px; flex: none; display: flex; align-items: center; font-size: 9px; gap: 4px; padding-right: 2px; }
.dots { flex: 1; height: 5px; background-image: linear-gradient(90deg, #fafaf8 2px, #a9a69f 2px 3px, transparent 3px), linear-gradient(90deg, #fafaf8 2px, #a9a69f 2px 3px, transparent 3px); background-size: 6px 2px, 6px 2px; background-position: 0 0, 3px 3px; background-repeat: repeat-x; }
.dots-s { flex: none; width: 73px; margin-left: 2px; }
.dname { margin: 0 2px; }
.dtitle-2 .dname { margin: 0 6px; }
.dbtn { width: 13px; height: 13px; flex: none; border: 1px solid #6f6d68; border-radius: 2px; background: #dedbd4; display: flex; }
.dbtn + .dbtn { margin-left: -3px; }
.dbtn svg { width: 11px; height: 11px; }
.tree { height: 128px; width: 263px; flex: none; background: #fff; border: 2px solid #1f3a76; border-radius: 3px; font-weight: 700; font-size: 11px; letter-spacing: .3px; }
.node { height: 16px; display: flex; align-items: center; }
.twig { width: 14px; height: 16px; margin-left: 10px; border-left: 1px dotted #888; background: linear-gradient(#888, #888) 0 8px / 8px 1px no-repeat; }
.node-sel { background: #0a246a; }
.expand { width: 9px; height: 9px; margin-left: 5px; margin-right: 10px; border: 1px solid #777; background: linear-gradient(#333, #333) center / 5px 1px no-repeat, linear-gradient(#333, #333) center / 1px 5px no-repeat, #fff; }
.chk { width: 13px; height: 13px; flex: none; background: #f4f3ef; border: 1px solid #bdbab4; border-radius: 2px; display: flex; }
.chk-on { background: #fff; border-color: #fff; }
.chk svg { width: 11px; height: 11px; }
.thumb { width: 16px; height: 16px; margin-left: 5px; display: grid; grid-template-columns: repeat(3, 1fr); flex: none; }
.thumb i { display: block; }
.thumb .t1 { background: #6d7ea6; } .thumb .t2 { background: #56698f; } .thumb .t3 { background: #8d9ab8; }
.thumb .t4 { background: #7d8cae; } .thumb .t5 { background: #4e628c; } .thumb .t6 { background: #33487a; }
.thumb .t7 { background: #6d7ea6; } .thumb .t8 { background: #95a1bc; } .thumb .t9 { background: #0a246a; }
.thumb-g .t1 { background: #fff; } .thumb-g .t2 { background: #d9d9d9; } .thumb-g .t3 { background: #fff; }
.thumb-g .t4 { background: #d2d2d2; } .thumb-g .t5 { background: #9d9d9d; } .thumb-g .t6 { background: #cfcfcf; }
.thumb-g .t7 { background: #a5a5a5; } .thumb-g .t8 { background: #dddddd; } .thumb-g .t9 { background: #fff; }
.nname { margin-left: 5px; }
.nname-sel { color: #fff; text-decoration: underline; outline: 1px dotted #e6d58a; flex: 1; }
.tabs { height: 21px; flex: none; display: flex; align-items: flex-start; padding-left: 1px; }
.tab { height: 17px; width: 75px; margin-top: 2px; display: flex; align-items: center; justify-content: center; border: 1px solid #8d8a83; background: #d4d0c8; border-radius: 0 3px 3px 3px; }
.tab-on { height: 20px; width: 53px; margin-top: 0; border-top: 0; border-radius: 0 0 3px 3px; background: #dedbd4; padding-top: 3px; }
.hdots { width: 84px; height: 5px; margin: 2px 0 0 88px; flex: none; background-image: linear-gradient(90deg, #fafaf8 2px, #a9a69f 2px 3px, transparent 3px), linear-gradient(90deg, #fafaf8 2px, #a9a69f 2px 3px, transparent 3px); background-size: 6px 2px, 6px 2px; background-position: 0 0, 3px 3px; background-repeat: repeat-x; }
.dtitle-2 { height: 14px; margin-top: 2px; }
.form { padding: 0 10px 0 9px; flex: none; }
.lab { display: block; height: 14px; line-height: 14px; margin-top: 13px; }
.lab-2 { margin-top: 7px; }
.row { height: 25px; margin-top: 4px; display: flex; align-items: center; gap: 7px; }
.fld { flex: 1; min-width: 0; height: 20px; padding: 0; background: #fff; border: 1px solid #8f8c85; border-radius: 2px; box-shadow: inset 1px 1px #eceae5; outline: 0; }
.pick { width: 26px; height: 25px; flex: none; background: #dad7d0; border: 1px solid #8f8c85; border-radius: 3px; display: flex; align-items: center; justify-content: center; }
.pick svg { width: 19px; height: 19px; }
.line { height: 20px; margin-top: 7px; display: flex; align-items: center; }
.line-c { justify-content: space-between; }
.line-l { margin-top: 6px; }
.ll { width: 46px; flex: none; }
.ll-t { width: 39px; }
.combo { width: 120px; height: 20px; display: flex; border: 1px solid #8f8c85; border-radius: 2px; background: #dad7d0; align-items: center; }
.combo-v { flex: 1; padding-left: 3px; }
.combo-a { width: 16px; height: 100%; border-left: 1px solid #8f8c85; flex: none; display: flex; align-items: center; justify-content: center; background: #dad7d0; }
.combo-a::after { content: ""; width: 0; height: 0; border: 4px solid transparent; border-top: 5px solid #000; border-bottom: 0; }
.acts { margin-top: 8px; display: flex; gap: 10px; }
.btn { position: relative; z-index: 2; width: 75px; height: 23px; display: flex; align-items: center; justify-content: center; background: #d8d5ce; border: 1px solid #8f8c85; border-radius: 3px; box-shadow: inset 0 1px #e8e6e1; }

.split { width: 6px; flex: none; display: flex; align-items: flex-start; justify-content: center; }
.split-dots { width: 3px; height: 120px; margin-top: 128px; background-image: linear-gradient(#fafaf8 2px, #a9a69f 2px 3px, transparent 3px); background-size: 2px 4px; background-repeat: repeat-y; }

.canvas { flex: 1; background: #fff; border: 1px solid #8f8c85; padding: 26px 0 0 168px; }
.map { width: 346px; height: 346px; display: grid; grid-template-columns: repeat(7, 1fr); grid-template-rows: repeat(7, 1fr); outline: 1px solid #f4282c; outline-offset: -1px; }
.map i { display: block; }
.map .l { background: #bfffa9; }
.map .t { background: #04888f; }
.map .y { background: #bbf40f; }
.map .k { background: #bdcb7a; }

.status { height: 26px; flex: none; display: flex; align-items: flex-start; padding-top: 3px; white-space: nowrap; }
.extent { width: 291px; padding-left: 5px; line-height: 19px; overflow: hidden; flex: none; font-size: 11px; word-spacing: 2.500px; }
.sbox { height: 20px; display: flex; align-items: center; border: 1px solid #8f8c85; border-radius: 2px; flex: none; justify-content: center; }
.sbox-c { width: 72px; margin-left: 3px; }
.sval { width: 292px; height: 20px; margin-left: 4px; display: flex; align-items: center; justify-content: center; background: #fff; border: 1px solid #8f8c85; border-radius: 2px; flex: none; font-size: 11px; }
.sbox-e { width: 42px; margin-left: 4px; }
.scombo { width: 82px; height: 21px; margin-left: 4px; display: flex; border: 1px solid #8f8c85; border-radius: 2px; flex: none; align-items: center; font-size: 11px; }
.scombo-v { flex: 1; background: #fff; height: 100%; padding-left: 3px; line-height: 19px; }
.combo-a2 { width: 18px; }
.sbtn { width: 23px; height: 21px; border: 1px solid #8f8c85; border-radius: 2px; flex: none; display: flex; align-items: center; justify-content: center; }
.sbtn svg { width: 19px; height: 19px; }
.sbtn-n { margin-left: 3px; }
.sbox-r { width: 88px; margin-left: 3px; gap: 5px; font-size: 11px; }
.chk-s { border-color: #bdbab4; }
.sbox-p { width: 62px; margin-left: 2px; color: #8c8a84; text-shadow: 1px 1px #fff; }
.sbtn-g { margin-left: 4px; width: 21px; }

.taskbar { height: 30px; flex: none; border-top: 1px solid #fff; display: flex; align-items: center; padding: 0 0 0 2px; white-space: nowrap; font-size: 11px; }
.start, .task { height: 23px; display: flex; align-items: center; background: #d4d0c8; box-shadow: inset 1px 1px #fff, inset -1px -1px #404040, inset -2px -2px #808080; flex: none; }
.start { width: 53px; font-weight: 700; padding-left: 3px; gap: 2px; font-size: 10.500px; }
.start svg { width: 16px; height: 16px; }
.task { width: 119px; margin-left: 4px; padding-left: 5px; gap: 3px; overflow: hidden; font-size: 10.800px; }
.start + .task { margin-left: 6px; }
.task svg { width: 16px; height: 16px; flex: none; }
.task-on { font-weight: 700; background: #eeece7; box-shadow: inset 1px 1px #404040, inset -1px -1px #fff; }
.lang { width: 16px; height: 16px; margin-left: 12px; background: #0a246a; color: #fff; display: flex; align-items: center; justify-content: center; font-size: 10px; flex: none; }
.tbsep { width: 2px; height: 23px; margin-left: 5px; background: #808080; border-right: 1px solid #fff; flex: none; }
.tray { margin-left: 4px; flex: 1; height: 24px; display: flex; align-items: center; gap: 2px; padding-left: 3px; box-shadow: inset 1px 1px #808080, inset -1px -1px #fff; }
.tray svg { width: 16px; height: 16px; flex: none; }
.clock { margin-left: 4px; }
```
